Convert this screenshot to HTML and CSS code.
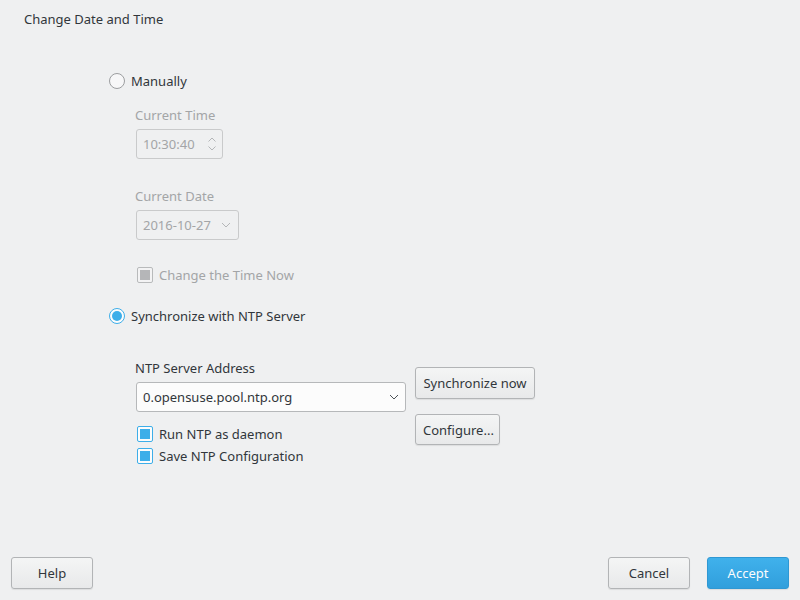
FILE: index.html
```html
<!DOCTYPE html>
<html>
<head>
<meta charset="utf-8">
<link rel="stylesheet" href="styles.css">
</head>
<body>
<div class="window">
  <div class="title">Change Date and Time</div>
  <div class="main">
    <div class="opt first">
      <span class="radio"></span><span>Manually</span>
    </div>
    <div class="sub disabled">
      <div class="lbl l1">Current Time</div>
      <div class="field spin">
        <span>10:30:40</span>
        <svg class="spinarrows" width="10" height="16" viewBox="0 0 10 16"><path d="M1.5 5.5 L5 2 L8.5 5.5 M1.5 10.5 L5 14 L8.5 10.5" fill="none" stroke="#b4b6b8" stroke-width="1"/></svg>
      </div>
      <div class="lbl l2">Current Date</div>
      <div class="field date">
        <span>2016-10-27</span>
        <svg class="chev" width="10" height="6" viewBox="0 0 10 6"><path d="M1 1 L5 5 L9 1" fill="none" stroke="#b4b6b8" stroke-width="1"/></svg>
      </div>
      <div class="check-row c0">
        <span class="check dis"></span><span>Change the Time Now</span>
      </div>
    </div>
    <div class="opt second">
      <span class="radio on"></span><span>Synchronize with NTP Server</span>
    </div>
    <div class="ntp">
      <div class="ntp-left">
        <div class="lbl">NTP Server Address</div>
        <div class="field server">
          <span>0.opensuse.pool.ntp.org</span>
          <svg class="chev" width="10" height="6" viewBox="0 0 10 6"><path d="M1 1 L5 5 L9 1" fill="none" stroke="#4d5257" stroke-width="1"/></svg>
        </div>
        <div class="check-row c1"><span class="check on"></span><span>Run NTP as daemon</span></div>
        <div class="check-row c2"><span class="check on"></span><span>Save NTP Configuration</span></div>
      </div>
      <div class="ntp-right">
        <button class="btn sync">Synchronize now</button>
        <button class="btn conf">Configure...</button>
      </div>
    </div>
  </div>
  <div class="footer">
    <button class="btn big">Help</button>
    <div class="right">
      <button class="btn big">Cancel</button>
      <button class="btn big accept">Accept</button>
    </div>
  </div>
</div>
</body>
</html>
```
FILE: styles.css
```css
html, body {
  margin: 0;
  padding: 0;
  background: #eff0f1;
}
body {
  font-family: "Noto Sans", "Open Sans", sans-serif;
  font-size: 13px;
  line-height: 18px;
  color: #31363b;
}
.window {
  width: 800px;
  height: 600px;
  display: flex;
  flex-direction: column;
}
.title {
  padding: 10px 24px 0;
  height: 18px;
}
.main {
  flex: 1;
  padding-left: 109px;
}
.opt {
  display: flex;
  align-items: center;
  gap: 6px;
  height: 18px;
}
.opt.first { margin-top: 44px; }
.opt.second { margin-top: 23px; }
.radio {
  width: 16px;
  height: 16px;
  box-sizing: border-box;
  border: 1px solid #9c9ea0;
  border-radius: 50%;
  background: #f7f7f8;
  position: relative;
}
.radio.on {
  border-color: #3daee9;
  background: #fcfcfc;
}
.radio.on::after {
  content: "";
  position: absolute;
  left: 2px; top: 2px;
  width: 10px; height: 10px;
  border-radius: 50%;
  background: #3daee9;
}
.sub {
  margin-left: 26px;
}
.disabled { color: #a3a5a7; }
.lbl { height: 18px; }
.l1 { margin-top: 16px; }
.l2 { margin-top: 28px; }
.field {
  box-sizing: border-box;
  height: 30px;
  margin-top: 5px;
  margin-left: 1px;
  border: 1px solid #c9cacb;
  border-radius: 3px;
  display: flex;
  align-items: center;
  justify-content: space-between;
  padding: 0 6px 0 6px;
}
.spin { width: 87px; padding-right: 5px; }
.date { width: 103px; padding-right: 7px; }
.server {
  width: 270px;
  background: #fcfcfc;
  border-color: #b6b8ba;
  color: #31363b;
  padding-right: 6px;
}
.check-row {
  display: flex;
  align-items: center;
  gap: 6px;
  height: 18px;
  padding-left: 2px;
}
.c0 { margin-top: 26px; }
.c1 { margin-top: 13px; }
.c2 { margin-top: 4px; }
.check {
  width: 16px;
  height: 16px;
  box-sizing: border-box;
  border-radius: 2px;
  border: 1px solid #3daee9;
  padding: 2px;
  background: #fcfcfc;
  display: flex;
}
.check::after {
  content: "";
  flex: 1;
  background: #3daee9;
}
.check.dis { border-color: #b8babb; background: #f3f3f4; }
.check.dis::after { background: #b5b6b8; }
.ntp {
  margin-left: 26px;
  margin-top: 34px;
  display: flex;
  gap: 9px;
}
.ntp-left { display: flex; flex-direction: column; }
.ntp-left .lbl { height: 18px; }
.ntp-right {
  padding-top: 8px;
  display: flex;
  flex-direction: column;
  align-items: flex-start;
  gap: 15px;
}
.btn {
  font: inherit;
  color: #31363b;
  box-sizing: border-box;
  height: 32px;
  border: 1px solid #b2b4b6;
  border-radius: 3px;
  background: linear-gradient(#f4f5f5, #e8e9ea);
  padding: 0 7px;
  box-shadow: 0 1px 1px rgba(0,0,0,0.08);
}
.sync { width: 120px; }
.conf { width: 85px; height: 31px; }
.footer {
  display: flex;
  justify-content: space-between;
  padding: 0 11px 11px;
}
.right { display: flex; gap: 17px; }
.big { width: 82px; height: 32px; }
.accept {
  background: linear-gradient(#40b1ec, #319fdc);
  border-color: #2f98d3;
  color: #fcfcfc;
}
```
